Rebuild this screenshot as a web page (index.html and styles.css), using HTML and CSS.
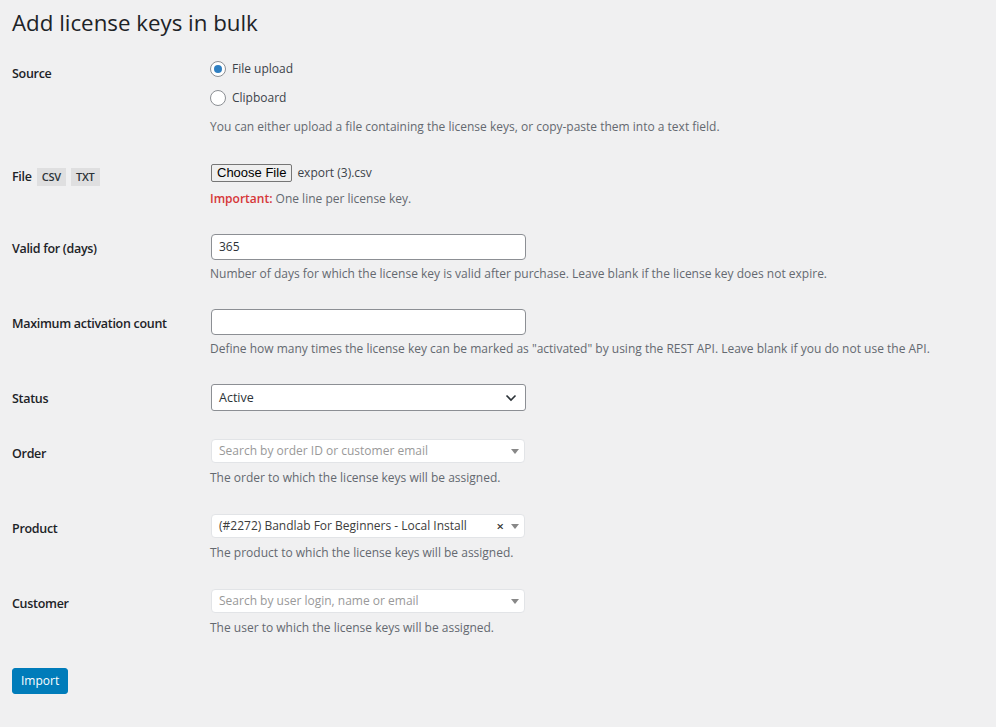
FILE: index.html
```html
<!DOCTYPE html>
<html lang="en">
<head>
<meta charset="utf-8">
<title>Add license keys in bulk</title>
<link rel="stylesheet" href="styles.css">
</head>
<body>
<div class="wrap">
  <h1 class="title">Add license keys in bulk</h1>
  <form class="form-table">
    <div class="row row-source">
      <div class="th">Source</div>
      <div class="td">
        <label class="radio"><span class="radio-dot checked"></span>File upload</label>
        <label class="radio"><span class="radio-dot"></span>Clipboard</label>
        <p class="description">You can either upload a file containing the license keys, or copy-paste them into a text field.</p>
      </div>
    </div>
    <div class="row row-file">
      <div class="th">File <code class="badge">CSV</code> <code class="badge">TXT</code></div>
      <div class="td">
        <div class="file-line"><button type="button" class="file-btn">Choose File</button><span class="file-name">export (3).csv</span></div>
        <p class="description desc-file"><strong class="important">Important:</strong> One line per license key.</p>
      </div>
    </div>
    <div class="row row-input">
      <div class="th">Valid for (days)</div>
      <div class="td">
        <div class="text-input">365</div>
        <p class="description desc-input">Number of days for which the license key is valid after purchase. Leave blank if the license key does not expire.</p>
      </div>
    </div>
    <div class="row row-input">
      <div class="th">Maximum activation count</div>
      <div class="td">
        <div class="text-input"></div>
        <p class="description desc-input">Define how many times the license key can be marked as "activated" by using the REST API. Leave blank if you do not use the API.</p>
      </div>
    </div>
    <div class="row row-status">
      <div class="th">Status</div>
      <div class="td">
        <div class="select">
          <span class="select-value">Active</span>
          <svg class="chevron" width="12" height="8" viewBox="0 0 12 8"><path d="M1.5 1.5 L6 6 L10.5 1.5" fill="none" stroke="#2c3338" stroke-width="1.6"/></svg>
        </div>
      </div>
    </div>
    <div class="row row-s2">
      <div class="th">Order</div>
      <div class="td">
        <div class="select2">
          <span class="s2-placeholder">Search by order ID or customer email</span>
          <span class="s2-arrow"></span>
        </div>
        <p class="description desc-s2">The order to which the license keys will be assigned.</p>
      </div>
    </div>
    <div class="row row-s2">
      <div class="th">Product</div>
      <div class="td">
        <div class="select2">
          <span class="s2-value">(#2272) Bandlab For Beginners - Local Install</span>
          <span class="s2-clear">×</span>
          <span class="s2-arrow"></span>
        </div>
        <p class="description desc-s2">The product to which the license keys will be assigned.</p>
      </div>
    </div>
    <div class="row row-s2">
      <div class="th">Customer</div>
      <div class="td">
        <div class="select2">
          <span class="s2-placeholder">Search by user login, name or email</span>
          <span class="s2-arrow"></span>
        </div>
        <p class="description desc-s2">The user to which the license keys will be assigned.</p>
      </div>
    </div>
  </form>
  <button type="button" class="button-primary">Import</button>
</div>
</body>
</html>
```

FILE: styles.css
```css
html, body {
  margin: 0;
  padding: 0;
  background: #f0f0f1;
}
body {
  font-family: "Open Sans", "Noto Sans", sans-serif;
  font-size: 12px;
  line-height: 18px;
  color: #3c434a;
  width: 996px;
  height: 727px;
  overflow: hidden;
}
.wrap {
  padding: 0 12px;
}
.title {
  margin: 0;
  padding: 8px 0 6px;
  font-size: 22.3px;
  line-height: 30px;
  font-weight: 400;
  color: #1d2327;
}
.row {
  display: grid;
  grid-template-columns: 198px 1fr;
}
.th {
  padding-top: 21px;
  font-size: 12.5px;
  letter-spacing: -0.3px;
  font-weight: 600;
  color: #1d2327;
  line-height: 18px;
  display: flex;
  align-items: center;
  align-self: start;
  gap: 5px;
}
.td {
  padding-top: 15px;
}
.row-source .td { padding-top: 16px; padding-bottom: 11px; }
.row-file .td { padding-bottom: 11px; }
.row-input .td { padding-bottom: 11px; }
.row-status .td { padding-bottom: 13px; }
.row-s2 .td { padding-bottom: 12px; }

.radio {
  display: flex;
  align-items: center;
  height: 18px;
  margin-bottom: 11px;
  color: #3c434a;
}
.radio-dot {
  width: 14px;
  height: 14px;
  border: 1px solid #8c8f94;
  border-radius: 50%;
  background: #fff;
  margin: 0 6px 0 0;
  position: relative;
  box-sizing: content-box;
}
.radio-dot.checked::before {
  content: "";
  position: absolute;
  left: 3px;
  top: 3px;
  width: 8px;
  height: 8px;
  border-radius: 50%;
  background: #2f7fc1;
}
.description {
  margin: 0;
  color: #646970;
  font-size: 12px;
  line-height: 18px;
}
.badge {
  font-family: "Open Sans", "Noto Sans", sans-serif;
  font-size: 11px;
  letter-spacing: -0.2px;
  font-weight: 600;
  background: #dfdfe0;
  color: #2c3338;
  padding: 0 5px;
  line-height: 18px;
}
.file-line {
  display: flex;
  align-items: center;
  height: 22px;
}
.file-btn {
  font-family: "Liberation Sans", Arial, sans-serif;
  font-size: 13px;
  height: 18px;
  padding: 0 5px;
  margin: 0 5px 0 1px;
  border: 1px solid #767676;
  border-radius: 2px;
  background: #efefef;
  color: #000;
  line-height: 16px;
}
.file-name {
  color: #3c434a;
}
.desc-file { margin-top: 6px; }
.important {
  color: #d63638;
  font-weight: 600;
}
.text-input {
  box-sizing: border-box;
  width: 315px;
  height: 26px;
  margin-left: 1px;
  border: 1px solid #8c8f94;
  border-radius: 4px;
  background: #fff;
  padding: 0 7px;
  line-height: 24px;
  color: #2c3338;
  font-size: 12px;
}
.desc-input { margin-top: 5px; }
.select {
  box-sizing: border-box;
  width: 315px;
  height: 27px;
  margin-left: 1px;
  border: 1px solid #8c8f94;
  border-radius: 3px;
  background: #fff;
  display: flex;
  align-items: center;
  justify-content: space-between;
  padding: 0 8px 0 7px;
  color: #2c3338;
  font-size: 12.5px;
}
.select2 {
  box-sizing: border-box;
  width: 314px;
  height: 24px;
  margin-left: 1px;
  border: 1px solid #e2e4e7;
  border-radius: 4px;
  background: #fff;
  display: flex;
  align-items: center;
  padding: 0 5px 0 7px;
  font-size: 12px;
}
.s2-placeholder {
  color: #999;
  flex: 1;
}
.s2-value {
  color: #3c3c3c;
  flex: 1;
}
.s2-clear {
  color: #333;
  font-weight: 600;
  font-size: 13px;
  margin-right: 7px;
}
.s2-arrow {
  width: 0;
  height: 0;
  border-left: 4px solid transparent;
  border-right: 4px solid transparent;
  border-top: 5px solid #888;
}
.desc-s2 { margin-top: 6px; }
.button-primary {
  margin-top: 19px;
  height: 26px;
  padding: 0 8px;
  background: #007cba;
  border: 1px solid #007cba;
  border-radius: 3px;
  color: #fff;
  font-family: "Open Sans", "Noto Sans", sans-serif;
  font-size: 12px;
  line-height: 24px;
}
```
